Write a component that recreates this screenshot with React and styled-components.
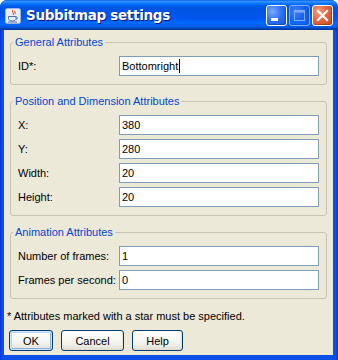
import React from 'react';
import styled, { createGlobalStyle } from 'styled-components';

const GlobalStyle = createGlobalStyle`
  html, body {
    margin: 0;
    padding: 0;
    background: #ffffff;
  }
  body {
    font-family: "Liberation Sans", Arial, sans-serif;
    font-size: 11px;
    color: #000000;
  }
`;

const Window = styled.div`
  display: flex;
  flex-direction: column;
  width: 338px;
  height: 360px;
  box-sizing: border-box;
  border-radius: 7px 7px 0 0;
  overflow: hidden;
  background: linear-gradient(to right, #0831d9 0px, #0a50e6 2px, #0a50e6 336px, #0831d9 338px);
`;

const TitleBar = styled.div`
  display: flex;
  align-items: center;
  height: 30px;
  flex: none;
  padding: 0 5px 0 5px;
  box-sizing: border-box;
  background: linear-gradient(
    to bottom,
    #0058ee 0%,
    #3593ff 4%,
    #288eff 7%,
    #127dff 10%,
    #036ffc 14%,
    #0262ee 18%,
    #0057e5 24%,
    #0054e3 30%,
    #0055eb 56%,
    #005bf5 66%,
    #026afe 76%,
    #0062ef 86%,
    #0052d6 92%,
    #0040ab 96%,
    #003092 100%
  );
`;

const TitleIcon = styled.svg`
  width: 16px;
  height: 16px;
  flex: none;
  margin-top: 1px;
`;

const Title = styled.div`
  flex: 1;
  margin-left: 5px;
  font-family: "DejaVu Sans", "Liberation Sans", sans-serif;
  font-weight: bold;
  font-size: 13.5px;
  color: #ffffff;
  text-shadow: 1px 1px 0 #0a1883;
  white-space: nowrap;
  letter-spacing: -0.3px;
`;

const Controls = styled.div`
  display: flex;
  gap: 2px;
  margin-top: 1px;
`;

const CtlButton = styled.div`
  width: 21px;
  height: 21px;
  box-sizing: border-box;
  border: 1px solid #ffffff;
  border-radius: 3px;
  display: flex;
  align-items: center;
  justify-content: center;
  opacity: ${p => (p.$disabled ? 0.5 : 1)};
  background: ${p =>
    p.$variant === 'close'
      ? 'radial-gradient(circle at 30% 30%, #f2a184 0%, #e3663f 45%, #c94a22 100%)'
      : 'radial-gradient(circle at 30% 30%, #7aa9ff 0%, #2a6ef5 50%, #1a55e0 100%)'};
  box-shadow: inset -1px -1px 1px rgba(0, 0, 0, 0.25);
`;

const Body = styled.div`
  flex: 1;
  display: flex;
  flex-direction: column;
  margin: 0 5px 5px 4px;
  padding: 6px 6px 0 5px;
  background: #ece9d8;
`;

const Group = styled.fieldset`
  margin: 0 0 10px 1px;
  padding: 0 7px 8px 7px;
  border: 1px solid #c6c4b4;
  border-radius: 3px;
  min-width: 0;
`;

const Legend = styled.legend`
  margin-left: -5px;
  padding: 0 2px;
  font-size: 11px;
  line-height: 13px;
  color: #0046d5;
`;

const Rows = styled.div`
  display: grid;
  grid-template-columns: 101px 1fr;
  row-gap: 4px;
  padding-top: 7px;
  align-items: center;
`;

const Label = styled.div`
  font-size: 11px;
  white-space: nowrap;
`;

const Field = styled.div`
  height: 20px;
  box-sizing: border-box;
  border: 1px solid #7f9db9;
  background: #ffffff;
  padding: 0 2px;
  display: flex;
  align-items: center;
  font-size: 11px;
`;

const Caret = styled.span`
  display: inline-block;
  width: 1px;
  height: 14px;
  background: #000000;
  margin-left: 1px;
`;

const Note = styled.div`
  margin: 1px 0 7px -2px;
  font-size: 11px;
  line-height: 13px;
`;

const ButtonRow = styled.div`
  display: flex;
  gap: 8px;
`;

const Button = styled.button`
  height: 21px;
  width: ${p => p.$w}px;
  padding: 0;
  box-sizing: border-box;
  border: 1px solid #003c74;
  border-radius: 3px;
  font-family: "Liberation Sans", Arial, sans-serif;
  font-size: 11px;
  color: #000000;
  background: linear-gradient(to bottom, #ffffff 0%, #f4f4ef 60%, #e6e4da 90%, #d6d0c5 100%);
  box-shadow: ${p =>
    p.$default
      ? 'inset 0 0 0 1px #cee7ff, inset 1px 1px 0 1px #bcd4f6, inset -1px -1px 0 1px #89ade4'
      : 'inset -1px -1px 0 #e3e0d2'};
`;

const JavaIcon = () => (
  <TitleIcon viewBox="0 0 16 16">
    <rect x="0.5" y="0.5" width="15" height="15" rx="2" fill="#e8eef9" stroke="#9bb4e6" />
    <path d="M8 2 C6 4 10 5 8 7 M10 3 C9 4 11 5 10 6" stroke="#e0542a" strokeWidth="1.1" fill="none" />
    <path d="M3.5 8.5 H11 V10.5 C11 12 9.5 13 7.3 13 C5 13 3.5 12 3.5 10.5 Z" fill="none" stroke="#4a6fb3" strokeWidth="1" />
    <path d="M11 9 C13 9 13 11.5 11 11.3" stroke="#4a6fb3" strokeWidth="1" fill="none" />
    <path d="M3 14 H12" stroke="#4a6fb3" strokeWidth="1" />
  </TitleIcon>
);

const MinIcon = () => (
  <svg width="19" height="19" viewBox="0 0 19 19">
    <rect x="4" y="12" width="7" height="3" fill="#ffffff" />
  </svg>
);

const MaxIcon = () => (
  <svg width="19" height="19" viewBox="0 0 19 19">
    <rect x="4.5" y="4.5" width="10" height="10" fill="none" stroke="#ffffff" />
    <rect x="4" y="4" width="11" height="2.5" fill="#ffffff" />
  </svg>
);

const CloseIcon = () => (
  <svg width="19" height="19" viewBox="0 0 19 19">
    <path d="M5 5 L14 14 M14 5 L5 14" stroke="#ffffff" strokeWidth="2.2" strokeLinecap="square" />
  </svg>
);

const groups = [
  {
    title: 'General Attributes',
    rows: [{ label: 'ID*:', value: 'Bottomright', caret: true }],
  },
  {
    title: 'Position and Dimension Attributes',
    rows: [
      { label: 'X:', value: '380' },
      { label: 'Y:', value: '280' },
      { label: 'Width:', value: '20' },
      { label: 'Height:', value: '20' },
    ],
  },
  {
    title: 'Animation Attributes',
    rows: [
      { label: 'Number of frames:', value: '1' },
      { label: 'Frames per second:', value: '0' },
    ],
  },
];

export default function App() {
  return (
    <>
      <GlobalStyle />
      <Window>
        <TitleBar>
          <JavaIcon />
          <Title>Subbitmap settings</Title>
          <Controls>
            <CtlButton><MinIcon /></CtlButton>
            <CtlButton $disabled><MaxIcon /></CtlButton>
            <CtlButton $variant="close"><CloseIcon /></CtlButton>
          </Controls>
        </TitleBar>
        <Body>
          {groups.map(g => (
            <Group key={g.title}>
              <Legend>{g.title}</Legend>
              <Rows>
                {g.rows.map(r => (
                  <React.Fragment key={r.label}>
                    <Label>{r.label}</Label>
                    <Field>
                      {r.value}
                      {r.caret && <Caret />}
                    </Field>
                  </React.Fragment>
                ))}
              </Rows>
            </Group>
          ))}
          <Note>* Attributes marked with a star must be specified.</Note>
          <ButtonRow>
            <Button $w={44} $default>OK</Button>
            <Button $w={63}>Cancel</Button>
            <Button $w={51}>Help</Button>
          </ButtonRow>
        </Body>
      </Window>
    </>
  );
}
